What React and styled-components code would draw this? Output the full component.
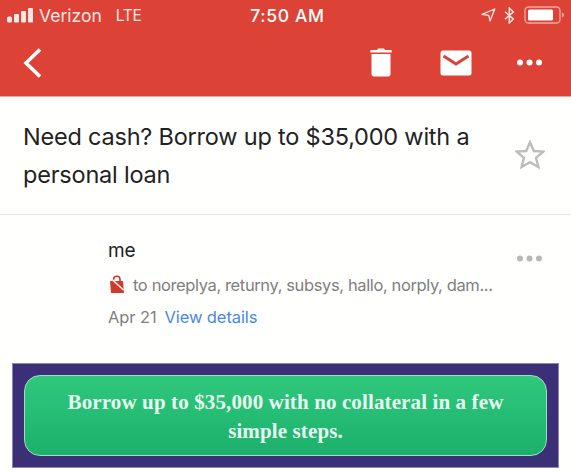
import React from "react";
import styled, { createGlobalStyle } from "styled-components";

const Global = createGlobalStyle`
  html, body { margin: 0; padding: 0; background: #fff; }
  body { width: 571px; height: 472px; overflow: hidden; font-family: Inter, "Liberation Sans", sans-serif; }
`;

const Page = styled.div`
  width: 571px;
  height: 472px;
  display: flex;
  flex-direction: column;
  background: #fffffe;
  overflow: hidden;
`;

const Header = styled.header`
  height: 97px;
  background: #dc4236;
  display: flex;
  flex-direction: column;
  flex-shrink: 0;
  box-sizing: border-box;
  border-bottom: 1px solid #e9a49d;
`;

const StatusBar = styled.div`
  height: 30px;
  display: grid;
  grid-template-columns: 1fr auto 1fr;
  align-items: center;
  padding: 0 6px 0 7px;
  color: #fbe6e3;
`;

const StatusLeft = styled.div`
  display: flex;
  align-items: center;
  gap: 5px;
  font-size: 17.5px;
  letter-spacing: 0;
`;

const Lte = styled.span`
  margin-left: 9px;
  font-size: 15.5px;
  letter-spacing: -0.2px;
`;

const Clock = styled.div`
  margin-left: 3px;
  font-size: 17.5px;
  font-weight: 500;
  color: #fff;
  letter-spacing: 0.65px;
`;

const StatusRight = styled.div`
  display: flex;
  align-items: center;
  justify-content: flex-end;
  gap: 9px;
`;

const ActionBar = styled.div`
  flex: 1;
  display: flex;
  align-items: center;
  padding: 0 29px 1px 23px;
`;

const Actions = styled.div`
  margin-left: auto;
  display: flex;
  align-items: center;
`;

const TrashSlot = styled.div`
  display: flex;
  margin-right: 48px;
`;

const MailSlot = styled.div`
  display: flex;
  margin-right: 45px;
`;

const Subject = styled.section`
  height: 118px;
  box-sizing: border-box;
  flex-shrink: 0;
  border-bottom: 1px solid #e6e6e6;
  display: flex;
  align-items: flex-start;
  padding: 21px 26px 0 23px;
`;

const SubjectText = styled.h1`
  margin: 0;
  flex: 1;
  font-size: 23.5px;
  font-weight: 400;
  line-height: 37.5px;
  letter-spacing: -0.21px;
  color: #222;
`;

const StarSlot = styled.div`
  margin-top: 22px;
`;

const Sender = styled.section`
  height: 148px;
  flex-shrink: 0;
  box-sizing: border-box;
  display: flex;
  align-items: flex-start;
  padding: 23px 29px 0 108px;
`;

const SenderBody = styled.div`
  flex: 1;
  display: flex;
  flex-direction: column;
`;

const Me = styled.div`
  font-size: 19px;
  line-height: 26px;
  color: #222;
  letter-spacing: -0.2px;
`;

const Recipients = styled.div`
  display: flex;
  align-items: center;
  gap: 7px;
  margin-top: 8px;
  height: 26px;
  font-size: 16.5px;
  letter-spacing: -0.38px;
  color: #808080;
  white-space: nowrap;
`;

const LockSlot = styled.div`
  display: flex;
  margin-top: -3px;
`;

const DateRow = styled.div`
  display: flex;
  gap: 8px;
  margin-top: 6px;
  font-size: 16.5px;
  line-height: 26px;
  letter-spacing: -0.1px;
  color: #808080;
`;

const Details = styled.span`
  color: #4a87e3;
`;

const MoreSlot = styled.div`
  margin-top: 17px;
  display: flex;
`;

const Banner = styled.div`
  margin: 0 12px;
  height: 105px;
  box-sizing: border-box;
  background: #3b2f78;
  border: 1px solid #8d84bd;
  padding: 11px 11px;
  flex-shrink: 0;
`;

const Cta = styled.div`
  height: 81px;
  box-sizing: border-box;
  border-radius: 16px;
  border: 1px solid #a3dec0;
  background: linear-gradient(#2fc87c, #1cb06c);
  color: #e9fbf1;
  font-family: "Liberation Serif", serif;
  font-weight: 700;
  font-size: 21px;
  letter-spacing: 0.12px;
  line-height: 29px;
  text-align: center;
  padding: 12px 36px 0;
`;

const Signal = () => (
  <svg width="27" height="16" viewBox="0 0 27 16">
    <g fill="#fbe6e3">
      <rect x="0" y="9.500" width="5" height="6" rx="1.500" />
      <rect x="7" y="7" width="5" height="8.500" rx="1" />
      <rect x="14" y="4" width="5" height="11.500" rx="1" />
      <rect x="21" y="1" width="5" height="14.500" rx="1" />
    </g>
  </svg>
);

const Location = () => (
  <svg width="15" height="14" viewBox="0 0 15 14" style={{ marginRight: -1 }}>
    <path d="M1 6.300 13.800 1 9 13 7.800 7.300Z" fill="none" stroke="#fbe6e3" strokeWidth="1.300" strokeLinejoin="round" />
  </svg>
);

const Bluetooth = () => (
  <svg width="11" height="17" viewBox="0 0 11 17">
    <path d="M1 4.800 9.300 12 5.300 16V1l4 4L1 12.200" fill="none" stroke="#fbe6e3" strokeWidth="1.500" />
  </svg>
);

const Battery = () => (
  <svg width="41" height="18" viewBox="0 0 41 18">
    <rect x="1" y="1" width="35" height="16" rx="3.500" fill="none" stroke="#f0a9a3" strokeWidth="1.300" />
    <rect x="4" y="3.500" width="25" height="11" rx="1.500" fill="#fff" />
    <path d="M38 6.500c1.600.4 2 1.300 2 2.500s-.4 2.100-2 2.500Z" fill="#f0a9a3" />
  </svg>
);

const Back = () => (
  <svg width="20" height="32" viewBox="0 0 20 32">
    <path d="M17 2.500 3 16l14 13.500" fill="none" stroke="#fff" strokeWidth="3.600" />
  </svg>
);

const Trash = () => (
  <svg width="22" height="29" viewBox="0 0 22 29">
    <path d="M8 0.500h6l1 1.500h6c.5 0 .8.400.8 1v1.500H.2V3c0-.6.300-1 .8-1h6Z" fill="#fff" />
    <path d="M1.500 6h19v20c0 1.600-1 2.500-2.500 2.500H4c-1.500 0-2.500-.9-2.500-2.500Z" fill="#fff" />
  </svg>
);

const Mail = () => (
  <svg width="32" height="26" viewBox="0 0 32 26">
    <rect x="0.500" y="0.500" width="31" height="25" rx="2.500" fill="#fff" />
    <path d="M3.500 6 16 14 28.500 6" fill="none" stroke="#dc4236" strokeWidth="3" />
  </svg>
);

const Dots = ({ color }) => (
  <svg width="25" height="7" viewBox="0 0 25 7">
    <g fill={color}>
      <circle cx="3" cy="3.500" r="3" />
      <circle cx="12.500" cy="3.500" r="3" />
      <circle cx="22" cy="3.500" r="3" />
    </g>
  </svg>
);

const Star = () => (
  <svg width="30" height="29" viewBox="0 0 30 29">
    <path d="M15 2.200 18.800 11 28.200 11.600 21 17.800 23.400 27 15 22.200 6.600 27 9 17.800 1.800 11.600 11.200 11Z" fill="none" stroke="#bdbdbd" strokeWidth="2.400" />
  </svg>
);

const Lock = () => (
  <svg width="18" height="18" viewBox="0 0 18 18">
    <path d="M2 6h13l1 12H3Z" fill="#cf3a30" />
    <path d="M5.500 6.500V4.500C5.500 2.700 7 1.300 8.800 1.300s3.200 1.400 3.200 3.200v2" fill="none" stroke="#cf3a30" strokeWidth="1.600" />
    <path d="M3 3.500 15.500 15" stroke="#fff" strokeWidth="1.400" />
  </svg>
);

export default function App() {
  return (
    <Page>
      <Global />
      <Header>
        <StatusBar>
          <StatusLeft>
            <Signal />
            <span>Verizon</span>
            <Lte>LTE</Lte>
          </StatusLeft>
          <Clock>7:50 AM</Clock>
          <StatusRight>
            <Location />
            <Bluetooth />
            <Battery />
          </StatusRight>
        </StatusBar>
        <ActionBar>
          <Back />
          <Actions>
            <TrashSlot><Trash /></TrashSlot>
            <MailSlot><Mail /></MailSlot>
            <Dots color="#fff" />
          </Actions>
        </ActionBar>
      </Header>
      <Subject>
        <SubjectText>Need cash? Borrow up to $35,000 with a personal loan</SubjectText>
        <StarSlot><Star /></StarSlot>
      </Subject>
      <Sender>
        <SenderBody>
          <Me>me</Me>
          <Recipients>
            <LockSlot><Lock /></LockSlot>
            <span>to noreplya, returny, subsys, hallo, norply, dam...</span>
          </Recipients>
          <DateRow>
            <span>Apr 21</span>
            <Details>View details</Details>
          </DateRow>
        </SenderBody>
        <MoreSlot><Dots color="#b8b8b8" /></MoreSlot>
      </Sender>
      <Banner>
        <Cta>Borrow up to $35,000 with no collateral in a few simple steps.</Cta>
      </Banner>
    </Page>
  );
}
